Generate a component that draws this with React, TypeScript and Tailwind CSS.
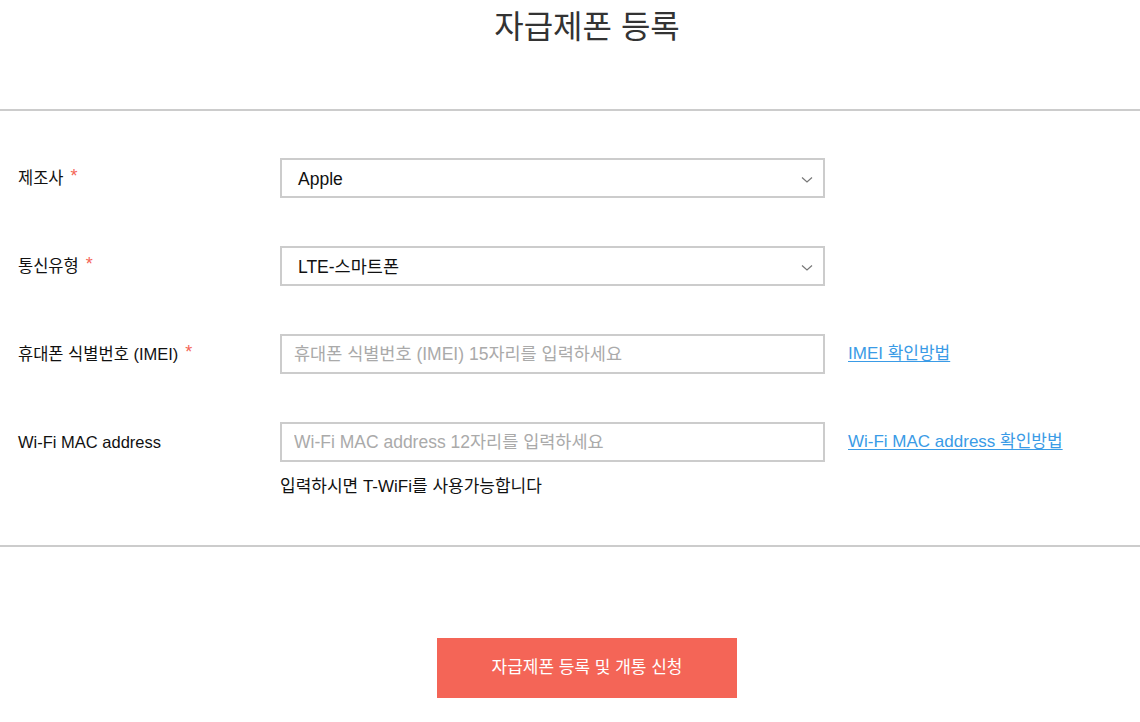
import React from "react";

const font = { fontFamily: '"Liberation Sans", "Noto Sans CJK KR", sans-serif' };

function Chevron() {
  return (
    <svg width="12" height="8" viewBox="0 0 12 8" className="shrink-0">
      <polyline points="1,1.5 6,6 11,1.5" fill="none" stroke="#777" strokeWidth="1.2" />
    </svg>
  );
}

function Label({ text, required }: { text: string; required?: boolean }) {
  return (
    <div className="w-[280px] h-[40px] pl-[18px] flex items-center text-[16.5px] text-[#111] shrink-0">
      <span>{text}</span>
      {required && <span className="ml-[7px] text-[#f46557] text-[18px] leading-none -mt-[4px]">*</span>}
    </div>
  );
}

function SelectBox({ value }: { value: string }) {
  return (
    <div className="w-[545px] h-[40px] border-2 border-[#cccccc] flex items-center justify-between pl-[16px] pr-[10px] pt-[3px] text-[17.5px] text-[#111]">
      <span>{value}</span>
      <Chevron />
    </div>
  );
}

function InputBox({ placeholder }: { placeholder: string }) {
  return (
    <input
      className="w-[545px] h-[40px] border-2 border-[#cccccc] px-[12px] text-[17.5px] text-[#111] placeholder:text-[#aaaaaa] outline-none"
      style={font}
      placeholder={placeholder}
    />
  );
}

function HelpLink({ text }: { text: string }) {
  return (
    <a href="#" className="ml-[23px] h-[40px] flex items-center text-[17px] text-[#3a9be6] underline underline-offset-2">
      {text}
    </a>
  );
}

export default function App() {
  return (
    <div className="w-[1140px] h-[722px] bg-white overflow-hidden" style={font}>
      {/* Header */}
      <div className="h-[109px] pt-[5px] pl-[34px] flex justify-center">
        <h1 className="text-[32px] leading-[45px] text-[#333333]">자급제폰 등록</h1>
      </div>

      {/* Form */}
      <div className="border-t-2 border-b-2 border-[#cccccc] pt-[47px] pb-[48px] flex flex-col gap-[48px]">
        <div className="flex items-start">
          <Label text="제조사" required />
          <SelectBox value="Apple" />
        </div>
        <div className="flex items-start">
          <Label text="통신유형" required />
          <SelectBox value="LTE-스마트폰" />
        </div>
        <div className="flex items-start">
          <Label text="휴대폰 식별번호 (IMEI)" required />
          <InputBox placeholder="휴대폰 식별번호 (IMEI) 15자리를 입력하세요" />
          <HelpLink text="IMEI 확인방법" />
        </div>
        <div className="flex items-start">
          <Label text="Wi-Fi MAC address" />
          <div className="flex flex-col">
            <InputBox placeholder="Wi-Fi MAC address 12자리를 입력하세요" />
            <p className="mt-[15px] text-[17px] leading-[20px] text-[#111]">입력하시면 T-WiFi를 사용가능합니다</p>
          </div>
          <HelpLink text="Wi-Fi MAC address 확인방법" />
        </div>
      </div>

      {/* Submit */}
      <div className="pt-[91px] pl-[34px] flex justify-center">
        <button className="w-[300px] h-[60px] bg-[#f46557] text-white text-[17px]" style={font}>
          자급제폰 등록 및 개통 신청
        </button>
      </div>
    </div>
  );
}
